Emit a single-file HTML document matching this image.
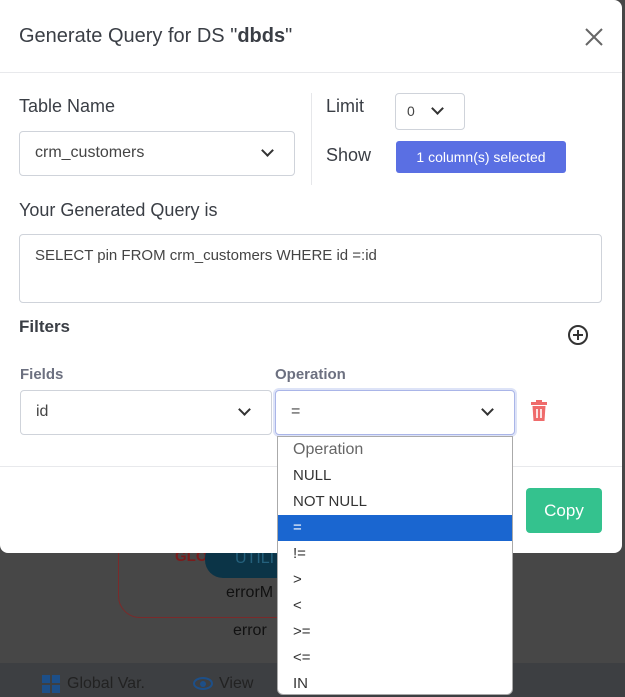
<!DOCTYPE html>
<html><head><style>
*{box-sizing:border-box;margin:0;padding:0}
body{width:625px;height:697px;overflow:hidden;background:#474747;font-family:"Liberation Sans",sans-serif;position:relative;color:#3a3e45}
.a{position:absolute}
.sel{position:absolute;border:1px solid #cfd3da;border-radius:4px;background:#fff;font-size:16px;color:#444}
.chev{position:absolute;width:9px;height:9px;border-right:2px solid #333;border-bottom:2px solid #333;transform:rotate(45deg)}
.it{position:absolute;left:0;width:100%;height:26px;padding-left:15px;font-size:15px;line-height:26px;color:#333}
</style></head><body>
<div class="a" style="left:118px;top:530px;width:200px;height:88px;border:1px solid #7a2a2a;border-radius:22px"></div>
<div class="a" style="left:175px;top:548px;color:#7a1c1c;font-weight:bold;font-size:15px">GLO</div>
<div class="a" style="left:205px;top:540px;width:90px;height:38px;background:#0b3447;border-radius:18px;color:#24607c;font-size:16px;padding:10px 0 0 30px">UTILIT</div>
<div class="a" style="left:226px;top:584px;font-size:16px;color:#111">errorM</div>
<div class="a" style="left:233px;top:622px;font-size:16px;color:#111">error</div>
<div class="a" style="left:0;top:663px;width:625px;height:34px;background:#3d3f42"></div>
<div class="a" style="left:42px;top:675px;width:8px;height:8px;background:#1d4f88;box-shadow:10px 0 #1d4f88,0 10px #1d4f88,10px 10px #1d4f88"></div>
<div class="a" style="left:67px;top:675px;font-size:16px;color:#222">Global Var.</div>
<div class="a" style="left:193px;top:677px;width:20px;height:13px;border:2px solid #1d4f88;border-radius:50%"></div>
<div class="a" style="left:200px;top:681px;width:6px;height:6px;background:#1d4f88;border-radius:50%"></div>
<div class="a" style="left:219px;top:675px;font-size:16px;color:#222">View</div>
<div class="a" style="left:0;top:0;width:622px;height:553px;background:#fff;border-radius:0 8px 8px 8px"></div>
<div class="a" style="left:0;top:72px;width:622px;height:1px;background:#e8e9ec"></div>
<div class="a" style="left:0;top:466px;width:622px;height:1px;background:#e8e9ec"></div>
<div class="a" style="left:19px;top:25px;font-size:20px;color:#3a3e45">Generate Query for DS "<b>dbds</b>"</div>
<svg class="a" style="left:585px;top:28px" width="18" height="18"><path d="M1 1L17 17M17 1L1 17" stroke="#666" stroke-width="2"/></svg>
<div class="a" style="left:19px;top:96px;font-size:18px">Table Name</div>
<div class="sel" style="left:19px;top:131px;width:276px;height:45px;padding:12px 15px">crm_customers</div>
<div class="chev" style="left:263px;top:146px"></div>
<div class="a" style="left:311px;top:93px;width:1px;height:92px;background:#e6e7ea"></div>
<div class="a" style="left:326px;top:96px;font-size:18px">Limit</div>
<div class="sel" style="left:395px;top:93px;width:70px;height:37px;padding:9px 11px;font-size:14px">0</div>
<div class="chev" style="left:433px;top:104px"></div>
<div class="a" style="left:326px;top:145px;font-size:18px">Show</div>
<div class="a" style="left:396px;top:141px;width:170px;height:32px;background:#5a6fe3;border-radius:3px;color:#fff;font-size:14px;line-height:32px;text-align:center">1 column(s) selected</div>
<div class="a" style="left:19px;top:200px;font-size:18px">Your Generated Query is</div>
<div class="sel" style="left:19px;top:234px;width:583px;height:69px;padding:12px 15px;font-size:15px">SELECT pin FROM crm_customers WHERE id =:id</div>
<div class="a" style="left:19px;top:317px;font-size:17px;font-weight:bold">Filters</div>
<svg class="a" style="left:567px;top:324px" width="22" height="22"><circle cx="11" cy="11" r="9" fill="none" stroke="#333" stroke-width="2"/><path d="M11 6V16M6 11H16" stroke="#333" stroke-width="2"/></svg>
<div class="a" style="left:20px;top:366px;font-size:15px;font-weight:bold;color:#6c7080">Fields</div>
<div class="a" style="left:275px;top:366px;font-size:15px;font-weight:bold;color:#6c7080">Operation</div>
<div class="sel" style="left:20px;top:390px;width:252px;height:45px;padding:12px 15px">id</div>
<div class="chev" style="left:240px;top:405px"></div>
<div class="sel" style="left:275px;top:390px;width:240px;height:45px;padding:12px 15px;border-color:#aab5e8;box-shadow:0 0 0 2px #dde3f7">=</div>
<div class="chev" style="left:483px;top:405px"></div>
<svg class="a" style="left:530px;top:400px" width="18" height="22"><rect x="1" y="2" width="16" height="3" fill="#ef6b6b"/><rect x="6" y="0" width="6" height="3" fill="#ef6b6b"/><path d="M2.5 6H15.5L14.5 21H3.5Z" fill="#ef6b6b"/><path d="M7 9V18M11 9V18" stroke="#fff" stroke-width="1.6"/></svg>
<div class="a" style="left:526px;top:488px;width:76px;height:45px;background:#34c28e;border-radius:4px;color:#fff;font-size:17px;line-height:45px;text-align:center">Copy</div>
<div class="a" style="left:277px;top:436px;width:236px;height:259px;background:#fff;border:1px solid #aaa;border-radius:0 0 6px 6px;overflow:hidden">
<div class="it" style="top:0;color:#666;font-size:16px">Operation</div>
<div class="it" style="top:26px">NULL</div>
<div class="it" style="top:52px">NOT NULL</div>
<div class="it" style="top:78px;background:#1a66d0;color:#fff">=</div>
<div class="it" style="top:104px">!=</div>
<div class="it" style="top:130px">&gt;</div>
<div class="it" style="top:156px">&lt;</div>
<div class="it" style="top:182px">&gt;=</div>
<div class="it" style="top:208px">&lt;=</div>
<div class="it" style="top:234px">IN</div>
</div>
</body></html>
